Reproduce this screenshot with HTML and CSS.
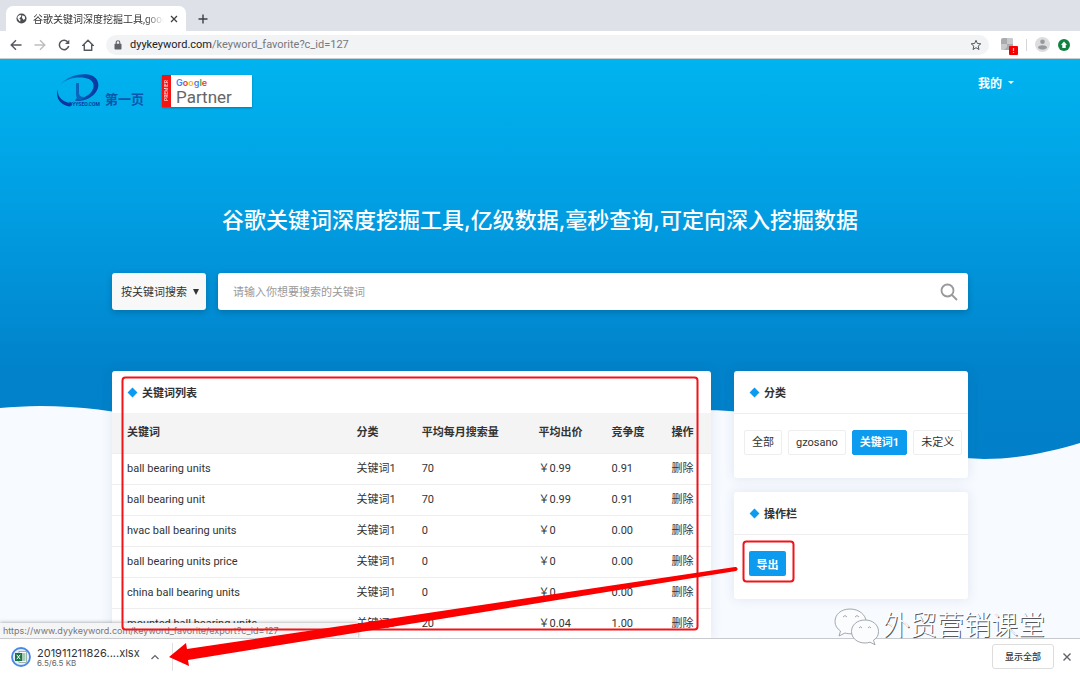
FILE: index.html
```html
<!DOCTYPE html>
<html lang="zh-CN">
<head>
    <meta charset="UTF-8">
    <meta name="viewport" content="width=device-width, initial-scale=1.0">
    <title>谷歌关键词深度挖掘工具</title>
    <link rel="stylesheet" href="styles.css">
</head>
<body>
    <!-- Browser tabs -->
    <div class="tab-strip">
        <div class="tab">
            <svg class="globe" viewBox="0 0 12 12"><circle cx="6" cy="6" r="5.500" fill="#4a4d51"/><path d="M2 3.500 4.500 2l1.500 1-1 1.500L3.500 6 5 7 4.500 9.500 3 8 1.500 5.500zM7 2.500 9.500 3.500 10 6 8.500 7.500 7 6 6.500 4.500z" fill="#fff"/></svg>
            <span class="tab-title">谷歌关键词深度挖掘工具,google</span>
            <button class="icon-btn" aria-label="关闭标签页"><svg width="8" height="8" viewBox="0 0 8 8"><path d="M1 1l6 6M7 1L1 7" stroke="#3c4043" stroke-width="1.3"/></svg></button>
        </div>
        <button class="icon-btn new-tab" aria-label="新标签页"><svg width="10" height="10" viewBox="0 0 10 10"><path d="M5 0.500v9M0.500 5h9" stroke="#3c4043" stroke-width="1.4"/></svg></button>
    </div>

    <!-- Address bar -->
    <div class="toolbar">
        <button class="icon-btn" aria-label="后退"><svg width="12" height="12" viewBox="0 0 12 12" fill="none" stroke="#54575b" stroke-width="1.4"><path d="M11.500 6H1.500M6 1.200 1.200 6 6 10.800"/></svg></button>
        <button class="icon-btn" aria-label="前进"><svg width="12" height="12" viewBox="0 0 12 12" fill="none" stroke="#bcbec1" stroke-width="1.4"><path d="M0.500 6h10M6 1.200 10.800 6 6 10.800"/></svg></button>
        <button class="icon-btn" aria-label="刷新"><svg width="12" height="12" viewBox="0 0 12 12" fill="none" stroke="#54575b" stroke-width="1.5"><path d="M10 3.300A4.700 4.700 0 1 0 10.700 7"/><path d="M11.300 0.700v4.300H7z" fill="#54575b" stroke="none"/></svg></button>
        <button class="icon-btn" aria-label="主页"><svg width="12" height="12" viewBox="0 0 12 12" fill="none" stroke="#54575b" stroke-width="1.4"><path d="M0.800 6.400 6 1.200l5.200 5.200H9.700v4.900H2.300V6.400z"/></svg></button>
        <div class="address">
            <svg width="8" height="10" viewBox="0 0 8 10"><rect x="0.500" y="3.700" width="7" height="5.800" rx="0.800" fill="#5f6368"/><path d="M2.200 4V2.500a1.800 1.800 0 0 1 3.600 0V4" fill="none" stroke="#5f6368" stroke-width="1.100"/></svg>
            <span class="url"><b>dyykeyword.com</b>/keyword_favorite?c_id=127</span>
            <svg width="12" height="12" viewBox="0 0 12 12"><path d="M6 1.300 7.400 4.500l3.400.3-2.600 2.300.8 3.400L6 8.700 3 10.500l.8-3.400L1.200 4.800l3.400-.3z" fill="none" stroke="#54575b"/></svg>
        </div>
        <div class="toolbar-end">
            <svg class="extension" viewBox="0 0 17 17"><rect width="12" height="12" rx="2" fill="#a9abad"/><path d="M6 0h4a2 2 0 0 1 2 2v4H6zM0 6h6v3L3 12H2a2 2 0 0 1-2-2z" fill="#c9cacb"/><rect x="8" y="8" width="9" height="9" rx="1" fill="#f60000"/><path d="M12.500 10v3M12.500 14v1" stroke="#ffb0a0" stroke-width="1.200"/></svg>
            <span class="divider"></span>
            <svg class="avatar" viewBox="0 0 15 15"><circle cx="7.500" cy="7.500" r="7.500" fill="#dcdddf"/><circle cx="7.500" cy="4.800" r="2.300" fill="#97999c"/><path d="M3 10.500c.5-3 8.500-3 9 0-1.500 2.700-7.500 2.700-9 0z" fill="#97999c"/></svg>
            <svg class="update" viewBox="0 0 12 12"><circle cx="6" cy="6" r="6" fill="#128240"/><path d="M6 2.500 9 6H7.700v3H4.300V6H3z" fill="#fff"/></svg>
        </div>
    </div>

    <!-- Page -->
    <div class="page">
        <svg class="wave" viewBox="0 0 1080 410" preserveAspectRatio="none">
            <defs>
                <linearGradient id="sky" x1="0" y1="0" x2="0" y2="1">
                    <stop offset="0" stop-color="#00b4f0"/>
                    <stop offset="0.400" stop-color="#019ce1"/>
                    <stop offset="0.780" stop-color="#0182ca"/>
                    <stop offset="1" stop-color="#0180c9"/>
                </linearGradient>
            </defs>
            <path d="M0 0H1080V384C1046 394 1016 400 984 400C890 398 820 351 700 351C540 351 440 415 330 400C240 387 150 347 40 347C26 347 12 348 0 349z" fill="url(#sky)"/>
        </svg>

        <header class="site-header">
            <a class="brand" href="#">
                <svg class="logo" viewBox="0 0 44 34">
                    <defs>
                        <linearGradient id="swoosh" x1="0" y1="0" x2="1" y2="0">
                            <stop offset="0" stop-color="#0a8ed6"/>
                            <stop offset="0.500" stop-color="#0a55b0"/>
                            <stop offset="1" stop-color="#0b35a0"/>
                        </linearGradient>
                    </defs>
                    <path d="M3 11C9 3 21-1 31 0.500C41 2 44 11 39 18C35 24 27 27.500 18 27L19 24.500C26 25 32 21.500 35 17C38.500 11 36 5 28 4C19 2.500 9 5 3 11z" fill="url(#swoosh)"/>
                    <path d="M1 15C0 22 4 28 15 29.500L13 32.500C3 31-2 24 1 15z" fill="#0b35a0"/>
                    <path d="M19 9h3v10q0 4 5 4l-3 3q-5 0-5-6z" fill="#0a66bc"/>
                    <text x="12" y="32" class="logo-url">DYYSEO.COM</text>
                </svg>
                <span class="brand-name">第一页</span>
            </a>
            <div class="partner">
                <span class="premier">PREMIER</span>
                <div class="partner-text">
                    <span class="google"><i class="b">G</i><i class="r">o</i><i class="y">o</i><i class="b">g</i><i class="g">l</i><i class="r">e</i></span>
                    <span class="partner-word">Partner</span>
                </div>
            </div>
            <button class="mine">我的<span class="caret"></span></button>
        </header>

        <main class="container">
            <h1>谷歌关键词深度挖掘工具,亿级数据,毫秒查询,可定向深入挖掘数据</h1>

            <form class="search">
                <div class="search-type">
                    <select aria-label="搜索方式">
                        <option>按关键词搜索</option>
                    </select>
                </div>
                <div class="search-box">
                    <input type="text" aria-label="关键词" placeholder="请输入你想要搜索的关键词">
                    <button type="button" class="icon-btn" aria-label="搜索"><svg width="18" height="18" viewBox="0 0 18 18" fill="none" stroke="#999" stroke-width="1.800"><circle cx="7.500" cy="7.500" r="6"/><path d="M12 12l5 5"/></svg></button>
                </div>
            </form>

            <div class="columns">
                <section class="card list-card">
                    <h2>关键词列表</h2>
                    <table>
                        <thead>
                            <tr><th class="col-word">关键词</th><th class="col-type">分类</th><th class="col-volume">平均每月搜索量</th><th class="col-price">平均出价</th><th class="col-rate">竞争度</th><th>操作</th></tr>
                        </thead>
                        <tbody>
                            <tr><td>ball bearing units</td><td>关键词1</td><td>70</td><td>￥0.99</td><td>0.91</td><td><a href="#">删除</a></td></tr>
                            <tr><td>ball bearing unit</td><td>关键词1</td><td>70</td><td>￥0.99</td><td>0.91</td><td><a href="#">删除</a></td></tr>
                            <tr><td>hvac ball bearing units</td><td>关键词1</td><td>0</td><td>￥0</td><td>0.00</td><td><a href="#">删除</a></td></tr>
                            <tr><td>ball bearing units price</td><td>关键词1</td><td>0</td><td>￥0</td><td>0.00</td><td><a href="#">删除</a></td></tr>
                            <tr><td>china ball bearing units</td><td>关键词1</td><td>0</td><td>￥0</td><td>0.00</td><td><a href="#">删除</a></td></tr>
                            <tr><td>mounted ball bearing units</td><td>关键词1</td><td>20</td><td>￥0.04</td><td>1.00</td><td><a href="#">删除</a></td></tr>
                        </tbody>
                    </table>
                </section>

                <aside>
                    <section class="card side-card">
                        <h2>分类</h2>
                        <div class="tags">
                            <a class="tag" href="#">全部</a>
                            <a class="tag" href="#">gzosano</a>
                            <a class="tag active" href="#">关键词1</a>
                            <a class="tag" href="#">未定义</a>
                        </div>
                    </section>
                    <section class="card side-card">
                        <h2>操作栏</h2>
                        <div class="actions">
                            <button class="export">导出</button>
                        </div>
                    </section>
                </aside>
            </div>
        </main>

        <div class="status">https://www.dyykeyword.com/keyword_favorite/export?c_id=127</div>
    </div>

    <!-- Downloads -->
    <footer class="downloads">
        <svg class="file-icon" viewBox="0 0 20 20"><circle cx="10" cy="10" r="9" fill="#e4eefc" stroke="#4a86e8" stroke-width="1.800"/><rect x="8" y="4.500" width="7.500" height="11" fill="#fff" stroke="#7d9b8a" stroke-width="0.700"/><path d="M11 7h3.500M11 9h3.500M11 11h3.500M11 13h3.500" stroke="#4c9b6c"/><rect x="4" y="6" width="7" height="8" fill="#1c7244"/><path d="M5.800 7.800l3.400 4.400M9.200 7.800l-3.400 4.400" stroke="#fff"/></svg>
        <div class="file">
            <span class="file-name">201911211826....xlsx</span>
            <span class="file-size">6.5/6.5 KB</span>
        </div>
        <button class="icon-btn file-menu" aria-label="文件选项"><svg width="8" height="6" viewBox="0 0 8 6"><path d="M0.500 5 4 1.500 7.500 5" fill="none" stroke="#5f6368" stroke-width="1.200"/></svg></button>
        <button class="show-all">显示全部</button>
        <button class="icon-btn" aria-label="关闭下载栏"><svg width="8" height="8" viewBox="0 0 8 8"><path d="M0.500 0.500l7 7M7.500 0.500l-7 7" stroke="#5f6368" stroke-width="1.400"/></svg></button>
    </footer>

    <!-- Annotations drawn over the window -->
    <svg class="marks" viewBox="0 0 1080 674" preserveAspectRatio="none">
        <g fill="none" stroke="#f0141a" stroke-width="2">
            <rect x="122.500" y="377.500" width="575" height="252" rx="3"/>
            <rect x="743.500" y="541.500" width="50" height="40" rx="3"/>
        </g>
        <path d="M735 567a2 2 0 0 1 1 4L188 660l1 6-20-9 17-14 1 6z" fill="#fb0000"/>
    </svg>
    <div class="watermark">
        <svg viewBox="0 0 46 38" fill="#fbfcfe" stroke="#9a9da2" stroke-width="0.900">
            <path d="M16 2C7 2 1 7.500 1 14.500c0 4 2 7 5.500 9.500L5 29l6-3c2 .6 4 .8 7 .8C26 26 32 21 32 14.500S25 2 16 2z"/>
            <path d="M31 13c-8 0-13.500 5-13.500 11.500S23 36 31 36c2 0 3.500-.3 5-.8l5 2.600-1.500-4.600c3.500-2 5-5 5-8.700C44.500 18 39 13 31 13z"/>
            <path d="M9 10q2-3 4 0M21 10q2-3 4 0M25 21q1.500-2.500 3 0M34 21q1.500-2.500 3 0" fill="none"/>
        </svg>
        <span>外贸营销课堂</span>
    </div>
</body>
</html>
```
FILE: styles.css
```css
* {
    box-sizing: border-box;
}

body {
    margin: 0;
    height: 100vh;
    display: flex;
    flex-direction: column;
    overflow: hidden;
    position: relative;
    font-family: Roboto, "Noto Sans CJK SC", sans-serif;
    font-size: 11px;
    color: #333;
    background: #fff;
}

button,
input,
select {
    font: inherit;
    color: inherit;
}

a {
    color: inherit;
    text-decoration: none;
}

svg {
    display: block;
    flex: none;
}

.icon-btn {
    border: none;
    background: none;
    padding: 0;
    display: flex;
}

/* Browser tabs */
.tab-strip {
    height: 31px;
    padding: 6px 6px 0;
    display: flex;
    background: #dee1e8;
}

.tab {
    width: 180px;
    padding: 0 8px 0 10px;
    display: flex;
    align-items: center;
    gap: 6px;
    background: #fff;
    border-radius: 7px 7px 0 0;
}

.globe {
    width: 11px;
    height: 11px;
}

.tab-title {
    flex: 1;
    font-size: 10px;
    white-space: nowrap;
    overflow: hidden;
    mask-image: linear-gradient(to right, #000 85%, transparent);
}

.new-tab {
    align-self: center;
    margin-left: 12px;
}

/* Address bar */
.toolbar {
    height: 28px;
    padding: 0 10px;
    display: flex;
    align-items: center;
    gap: 12px;
    background: #fff;
    border-bottom: 1px solid #c9cdd2;
}

.address {
    flex: 1;
    height: 20px;
    padding: 0 7px 0 8px;
    display: flex;
    align-items: center;
    gap: 8px;
    background: #f1f3f4;
    border-radius: 10px;
}

.url {
    flex: 1;
    color: #75787c;
    white-space: nowrap;
}

.url b {
    font-weight: normal;
    color: #202124;
}

.toolbar-end {
    display: flex;
    align-items: center;
    gap: 8px;
}

.extension {
    width: 17px;
    height: 17px;
    margin-top: 4px;
}

.divider {
    width: 1px;
    height: 12px;
    background: #d5d7da;
}

.avatar {
    width: 15px;
    height: 15px;
}

.update {
    width: 12px;
    height: 12px;
}

/* Page */
.page {
    flex: 1;
    min-height: 0;
    position: relative;
    overflow: hidden;
    background: #f7faff;
}

.wave {
    position: absolute;
    top: 0;
    left: 0;
    width: 100%;
    height: 410px;
}

.site-header {
    position: relative;
    height: 64px;
    padding: 0 66px 0 57px;
    display: flex;
    align-items: center;
}

.brand {
    display: flex;
    align-items: flex-end;
    gap: 4px;
    color: #0b55ab;
}

.logo {
    width: 44px;
    height: 34px;
}

.logo-url {
    font-size: 5px;
    font-weight: bold;
    fill: #0b3c9c;
}

.brand-name {
    font-size: 13px;
    line-height: 16px;
    font-weight: bold;
}

.partner {
    margin-left: 18px;
    width: 90px;
    height: 32px;
    display: flex;
    background: #fff;
    box-shadow: 0 1px 2px rgba(0, 0, 0, 0.3);
}

.premier {
    width: 9px;
    background: #f31313;
    color: #fff;
    font-size: 5px;
    line-height: 9px;
    text-align: center;
    writing-mode: vertical-rl;
    transform: rotate(180deg);
}

.partner-text {
    padding: 2px 0 0 5px;
    display: flex;
    flex-direction: column;
    color: #666;
}

.google {
    font-family: Inter, sans-serif;
    font-size: 9px;
    line-height: 12px;
    font-weight: 600;
}

.google i {
    font-style: normal;
}

.google .b { color: #4285f4; }
.google .r { color: #ea4335; }
.google .y { color: #fbbc05; }
.google .g { color: #34a853; }

.partner-word {
    font-size: 17px;
    line-height: 17px;
}

.mine {
    margin: 0 0 18px auto;
    padding: 0;
    border: none;
    background: none;
    display: flex;
    align-items: center;
    gap: 6px;
    color: #fff;
    font-size: 12px;
    font-weight: bold;
}

.caret {
    border: 3px solid transparent;
    border-top-color: #fff;
    border-bottom: none;
}

.container {
    position: relative;
    max-width: 872px;
    margin: 0 auto;
    padding: 0 8px;
}

h1 {
    margin: 80px 0 36px;
    font-family: Inter, "Noto Sans CJK SC", sans-serif;
    font-size: 22px;
    line-height: 34px;
    font-weight: 500;
    text-align: center;
    color: #fff;
}

/* Search */
.search {
    display: flex;
    gap: 12px;
    margin-bottom: 61px;
    font-family: Inter, "Noto Sans CJK SC", sans-serif;
}

.search-type {
    position: relative;
    width: 94px;
}

.search-type select {
    width: 100%;
    height: 37px;
    padding: 0 9px;
    border: none;
    border-radius: 3px;
    background: #f8f8f8;
    appearance: none;
    box-shadow: 0 2px 6px rgba(0, 0, 0, 0.2);
}

.search-type::after {
    content: "";
    position: absolute;
    top: 16px;
    right: 7px;
    border: 3px solid transparent;
    border-top: 6px solid #333;
    border-bottom: none;
}

.search-box {
    flex: 1;
    height: 37px;
    padding: 0 10px 0 15px;
    display: flex;
    align-items: center;
    background: #fff;
    border-radius: 3px;
    box-shadow: 0 2px 6px rgba(0, 0, 0, 0.2);
}

.search-box input {
    flex: 1;
    padding: 0;
    border: none;
    outline: none;
    background: none;
}

.search-box input::placeholder {
    color: #999;
}

/* Cards */
.columns {
    display: grid;
    grid-template-columns: 1fr 234px;
    gap: 23px;
}

.card {
    background: #fff;
    border-radius: 3px;
    box-shadow: 0 0 12px rgba(60, 80, 120, 0.12);
}

.card h2 {
    margin: 0;
    height: 42px;
    padding: 0 15px;
    display: flex;
    align-items: center;
    gap: 6px;
    font-size: 11px;
    font-weight: bold;
}

.card h2::before {
    content: "";
    width: 7px;
    height: 7px;
    margin-left: 2px;
    background: #0d9bf0;
    transform: rotate(45deg);
}

table {
    width: 100%;
    table-layout: fixed;
    border-collapse: collapse;
}

th,
td {
    padding: 0 0 0 15px;
    line-height: 20px;
    text-align: left;
    white-space: nowrap;
    border-bottom: 1px solid #eee;
}

th {
    height: 40px;
    background: #f4f4f4;
    font-weight: bold;
}

td {
    height: 31px;
}

.col-word { width: 38.3%; }
.col-type { width: 10.9%; }
.col-volume { width: 19.5%; }
.col-price { width: 12.2%; }
.col-rate { width: 10%; }

.side-card {
    height: 107px;
    margin-bottom: 14px;
}

.side-card h2 {
    height: 43px;
    border-bottom: 1px solid #eee;
}

.tags {
    padding: 16px 10px;
    display: flex;
    gap: 6px;
}

.tag {
    height: 25px;
    padding: 0 7px;
    line-height: 23px;
    border: 1px solid #eee;
    border-radius: 2px;
    white-space: nowrap;
}

.tag.active {
    background: #0d9bf0;
    border-color: #0d9bf0;
    color: #fff;
    font-weight: bold;
}

.actions {
    padding: 16px 15px;
}

.export {
    width: 37px;
    height: 25px;
    padding: 0;
    border: none;
    border-radius: 2px;
    background: #0d9bf0;
    color: #fff;
    font-weight: bold;
}

.status {
    position: absolute;
    left: 0;
    bottom: 0;
    width: 358px;
    height: 15px;
    padding-left: 3px;
    font-family: Inter, sans-serif;
    font-size: 9px;
    line-height: 15px;
    color: #777;
    white-space: nowrap;
    background: #f5f5f6;
    box-shadow: 0 0 4px rgba(0, 0, 0, 0.4);
}

/* Downloads */
.downloads {
    height: 36px;
    padding: 0 9px 0 11px;
    display: flex;
    align-items: center;
    background: #fff;
    border-top: 1px solid #c8cacd;
}

.file-icon {
    width: 20px;
    height: 20px;
}

.file {
    margin-left: 6px;
    display: flex;
    flex-direction: column;
    font-family: Inter, sans-serif;
}

.file-name {
    font-size: 11px;
    line-height: 12px;
}

.file-size {
    font-size: 8px;
    line-height: 8px;
    color: #666;
}

.file-menu {
    height: 28px;
    margin-left: 11px;
    padding-right: 13px;
    align-items: center;
    border-right: 1px solid #e0e0e0;
}

.show-all {
    margin: 0 9px 0 auto;
    width: 62px;
    height: 25px;
    padding: 0;
    border: 1px solid #ddd;
    border-radius: 3px;
    background: #fff;
    font-size: 9px;
    font-weight: 500;
}

/* Annotations */
.marks {
    position: absolute;
    top: 0;
    left: 0;
    width: 100%;
    height: 100%;
    pointer-events: none;
}

.watermark {
    position: absolute;
    right: 35px;
    bottom: 28px;
    display: flex;
    align-items: center;
    gap: 3px;
    font-size: 27px;
    line-height: 40px;
    font-weight: 300;
    color: #fff;
    text-shadow: 1px 1px 0 #55585c;
}

.watermark svg {
    width: 46px;
    height: 38px;
}
```
